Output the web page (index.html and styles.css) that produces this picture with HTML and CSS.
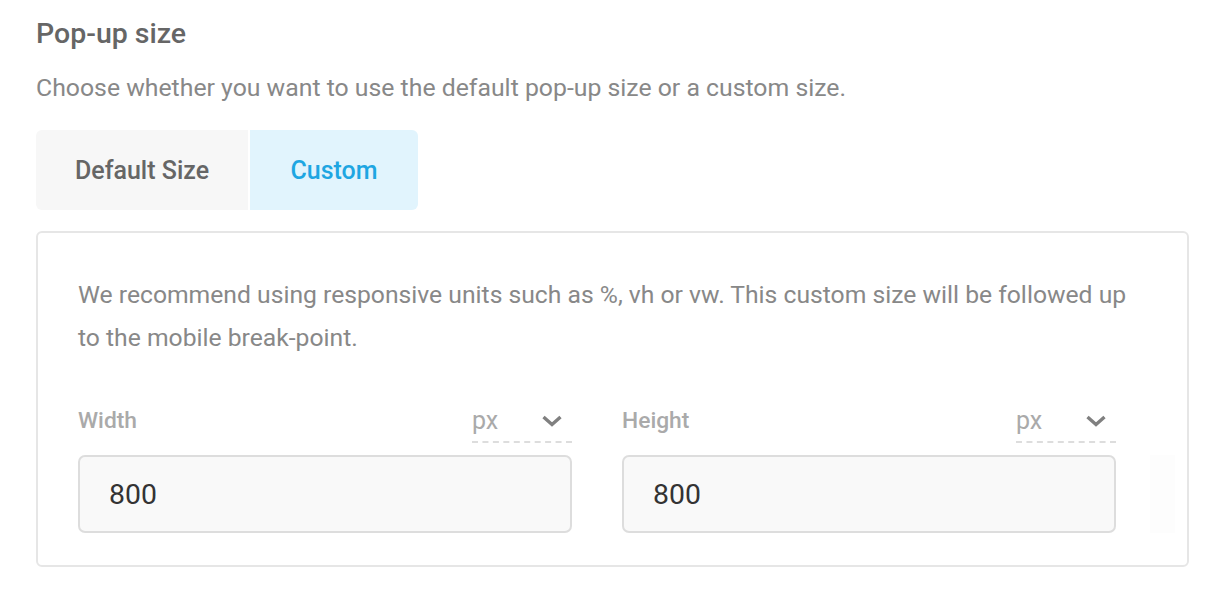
FILE: index.html
```html
<!DOCTYPE html>
<html lang="en">
<head>
  <meta charset="UTF-8" />
  <title>Pop-up size</title>
  <link rel="stylesheet" href="styles.css">
</head>
<body>
  <div class="setting">
    <h2 class="setting-title">Pop-up size</h2>
    <p class="setting-desc">Choose whether you want to use the default pop-up size or a custom size.</p>

    <div class="tabs">
      <button class="tab">Default Size</button>
      <button class="tab active">Custom</button>
    </div>

    <div class="panel">
      <p class="panel-note">We recommend using responsive units such as %, vh or vw. This custom size will be followed up to the mobile break-point.</p>

      <div class="fields">
        <div class="field">
          <div class="field-head">
            <label class="field-label">Width</label>
            <div class="unit">
              <span>px</span>
              <svg width="22" height="14" viewBox="0 0 22 14"><path d="M2.5 3l8.5 7.5 8.5-7.5" fill="none" stroke="#808080" stroke-width="3.4"/></svg>
            </div>
          </div>
          <input class="field-input" type="text" value="800" />
        </div>
        <div class="field">
          <div class="field-head">
            <label class="field-label">Height</label>
            <div class="unit">
              <span>px</span>
              <svg width="22" height="14" viewBox="0 0 22 14"><path d="M2.5 3l8.5 7.5 8.5-7.5" fill="none" stroke="#808080" stroke-width="3.4"/></svg>
            </div>
          </div>
          <input class="field-input" type="text" value="800" />
        </div>
        <div class="field-ghost"></div>
      </div>
    </div>
  </div>
</body>
</html>
```

FILE: styles.css
```css
body {
  font-family: 'Roboto', sans-serif;
  background: #fff;
  margin: 0;
  padding: 18px 36px;
}

.setting {
  width: 1153px;
}

.setting-title {
  margin: 0;
  font-size: 28.5px;
  font-weight: 500;
  color: #666;
  line-height: 32px;
}

.setting-desc {
  margin: 23px 0 0;
  font-size: 24.8px;
  color: #888;
  line-height: 30px;
}

.tabs {
  display: flex;
  gap: 2px;
  margin-top: 27px;
}

.tab {
  height: 80px;
  border: none;
  font-family: inherit;
  font-size: 25px;
  font-weight: 500;
  color: #666;
  background: #f7f7f7;
  padding: 0;
}

.tab:first-child {
  width: 212px;
  border-radius: 6px 0 0 6px;
}

.tab.active {
  width: 168px;
  background: #e1f4fd;
  color: #1ea6e2;
  border-radius: 0 6px 6px 0;
}

.panel {
  margin-top: 21px;
  border: 2px solid #e6e6e6;
  border-radius: 6px;
  padding: 40px 40px 32px;
  box-sizing: border-box;
  height: 336px;
}

.panel-note {
  margin: 0;
  font-size: 24.7px;
  color: #888;
  line-height: 43px;
}

.fields {
  display: flex;
  gap: 50px;
  margin-top: 40px;
}

.field {
  width: 494px;
  flex-shrink: 0;
}

.field-head {
  display: flex;
  justify-content: space-between;
  align-items: flex-end;
  height: 44px;
}

.field-label {
  font-size: 22.8px;
  font-weight: 500;
  color: #aaa;
  line-height: 28px;
  padding-bottom: 8px;
}

.unit {
  width: 100px;
  display: flex;
  justify-content: space-between;
  align-items: center;
  border-bottom: 2px dashed #ddd;
  padding-bottom: 6px;
  font-size: 25px;
  line-height: 28px;
  color: #aaa;
}

.unit svg {
  margin-right: 9px;
}

.field-input {
  display: block;
  width: 100%;
  height: 78px;
  margin-top: 12px;
  box-sizing: border-box;
  border: 2px solid #ddd;
  border-radius: 7px;
  background: #f9f9f9;
  font-family: inherit;
  font-size: 28.4px;
  color: #333;
  padding: 0 29px;
  outline: none;
}

.field-ghost {
  flex-shrink: 0;
  width: 25px;
  height: 78px;
  margin-top: 56px;
  margin-left: -16px;
  background: #fdfdfd;
}
```
